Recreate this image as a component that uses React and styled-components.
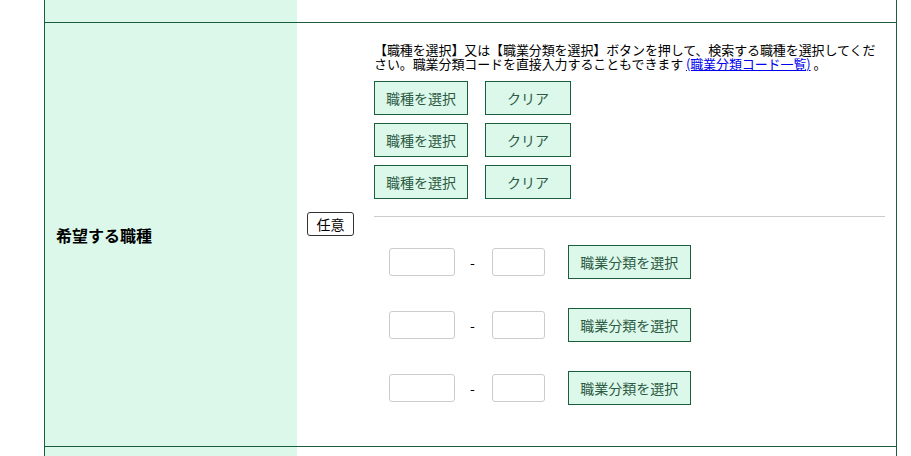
import React from 'react'
import styled, { createGlobalStyle } from 'styled-components'

const GlobalStyle = createGlobalStyle`
    body {
        margin: 0;
        background: #ffffff;
        font-family: "Noto Sans CJK JP", "Noto Sans", sans-serif;
        color: #000000;
    }
`

const Table = styled.div`
    margin-left: 44px;
    width: 851px;
    border-left: 1px solid #1b5e3b;
    border-right: 1px solid #1b5e3b;
`

const Row = styled.div`
    display: flex;
    height: ${props => props.$height ? props.$height + 'px' : 'auto'};
    border-bottom: ${props => props.$last ? 'none' : '1px solid #1b5e3b'};
`

const Label = styled.div`
    width: 252px;
    flex-shrink: 0;
    background: #dcf8ea;
    display: flex;
    align-items: center;
    padding: 0 11px;
    box-sizing: border-box;
    font-size: 16px;
    font-weight: bold;
    line-height: 20px;
`

const Value = styled.div`
    flex: 1;
    display: flex;
    align-items: center;
    padding: ${props => props.$empty ? '0' : '20px 9px 41px 10px'};
`

const Badge = styled.span`
    flex-shrink: 0;
    width: 47px;
    height: 24px;
    box-sizing: border-box;
    border: 1px solid #333333;
    border-radius: 3px;
    display: flex;
    align-items: center;
    justify-content: center;
    font-size: 14px;
    line-height: 1;
    margin-right: 20px;
`

const Content = styled.div`
    width: 511px;
    display: flex;
    flex-direction: column;
`

const Note = styled.p`
    margin: 0 0 10px;
    font-size: 13px;
    line-height: 14px;
    letter-spacing: -0.1px;

    a {
        color: #0000ee;
        text-decoration: underline;
    }
`

const ButtonRow = styled.div`
    display: flex;
    gap: 17px;
    margin-bottom: 8px;
`

const GreenButton = styled.button`
    width: ${props => props.$width}px;
    height: 34px;
    padding: 0;
    margin-left: ${props => props.$offset || 0}px;
    background: #dcf8ea;
    border: 1px solid #1b5e3b;
    border-radius: 0;
    color: #2d5a43;
    font-family: inherit;
    font-size: 14px;
    line-height: 1;
    cursor: pointer;
`

const Divider = styled.hr`
    margin: 9px 0 28px;
    border: none;
    border-top: 1px solid #cccccc;
    height: 0;
`

const CodeRow = styled.div`
    display: flex;
    align-items: center;
    padding-left: 15px;
    margin-bottom: ${props => props.$last ? 0 : 29}px;
`

const CodeInput = styled.input`
    width: ${props => props.$width}px;
    height: 28px;
    box-sizing: border-box;
    border: 1px solid #cccccc;
    border-radius: 3px;
    padding: 0 4px;
    font-size: 14px;
`

const Dash = styled.span`
    margin: 0 17px 0 15px;
    font-size: 14px;
    line-height: 1;
`

const codeRows = [0, 1, 2]

export default function App () {
    return (
        <>
            <GlobalStyle />
            <Table>
                <Row $height={22}>
                    <Label />
                    <Value $empty />
                </Row>
                <Row>
                    <Label>希望する職種</Label>
                    <Value>
                        <Badge>任意</Badge>
                        <Content>
                            <Note>
                                【職種を選択】又は【職業分類を選択】ボタンを押して、検索する職種を選択してください。職業分類コードを直接入力することもできます <a href="#">(職業分類コード一覧)</a> 。
                            </Note>
                            {codeRows.map(i => (
                                <ButtonRow key={i}>
                                    <GreenButton $width={94}>職種を選択</GreenButton>
                                    <GreenButton $width={86}>クリア</GreenButton>
                                </ButtonRow>
                            ))}
                            <Divider />
                            {codeRows.map(i => (
                                <CodeRow key={i} $last={i === 2}>
                                    <CodeInput $width={66} />
                                    <Dash>-</Dash>
                                    <CodeInput $width={53} />
                                    <GreenButton $width={123} $offset={23}>職業分類を選択</GreenButton>
                                </CodeRow>
                            ))}
                        </Content>
                    </Value>
                </Row>
                <Row $height={20} $last>
                    <Label />
                    <Value $empty />
                </Row>
            </Table>
        </>
    )
}
